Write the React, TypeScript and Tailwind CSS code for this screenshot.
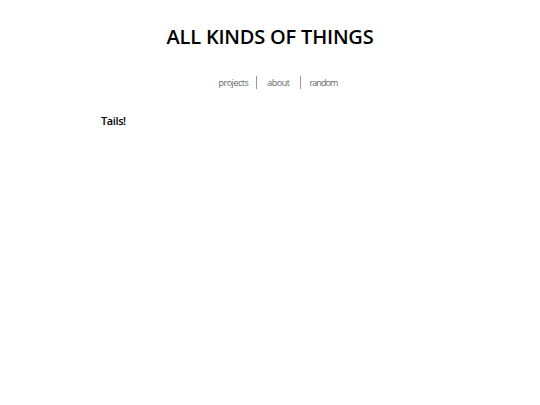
export default function App() {
  return (
    <div className="min-h-[405px] bg-white font-['Open_Sans',sans-serif] text-black">
      <header className="pt-[22px] text-center">
        <h1 className="text-[20px] font-semibold leading-[30px] tracking-[-0.2px]">ALL KINDS OF THINGS</h1>
      </header>
      <nav className="mt-[24px] flex justify-center pl-[16px] text-[9px] tracking-[-0.5px] text-[#666]">
        <a className="pr-[8px] leading-[13px]">projects</a>
        <span className="h-[13px] w-px bg-[#999]" />
        <a className="pl-[10px] pr-[11px] leading-[13px]">about</a>
        <span className="h-[13px] w-px bg-[#999]" />
        <a className="pl-[8px] leading-[13px] tracking-[-0.9px]">random</a>
      </nav>
      <main className="mx-auto mt-[24px] w-[338px]">
        <h2 className="text-[11px] font-semibold tracking-[-0.4px]">Tails!</h2>
      </main>
    </div>
  );
}
